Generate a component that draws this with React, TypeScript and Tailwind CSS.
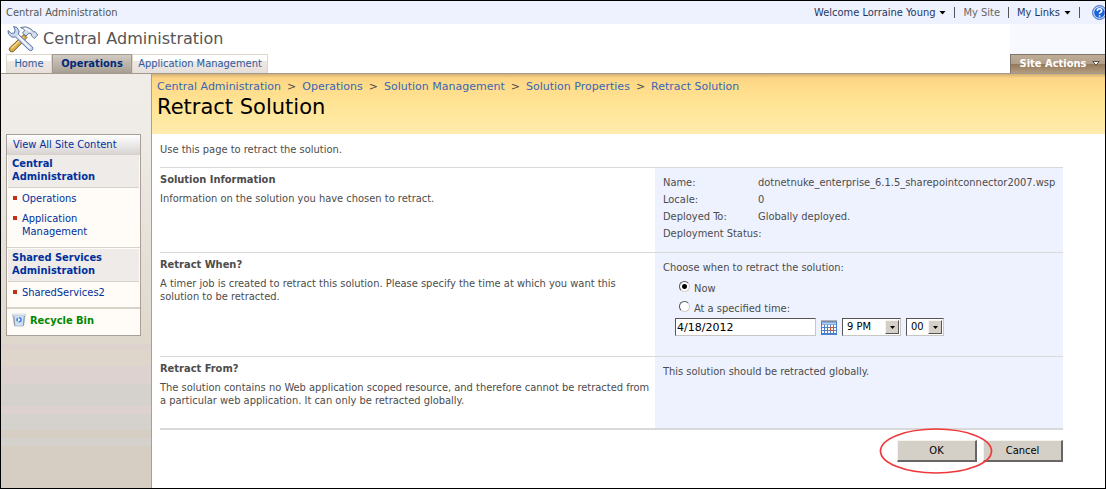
import { useState } from "react";
import type { ReactNode } from "react";

function Caret() {
  return (
    <svg width="7" height="4" viewBox="0 0 7 4" aria-hidden="true">
      <path d="M0.5 0h6L3.5 3.6z" fill="#000" />
    </svg>
  );
}

function ToolsIcon() {
  return (
    <svg width="32" height="28" viewBox="0 0 32 28" aria-hidden="true">
      <path d="M3 22.500 17 9.500l3 3L6.500 26.500Q4.500 27.500 3 26 1.500 24.500 3 22.500z" fill="#d9ac4c" stroke="#7d5f24" strokeWidth="1" />
      <path d="M4.500 23.500 16.500 12" stroke="#f7dc94" strokeWidth="1.300" />
      <path d="M13.500 2.500Q19 .5 24 4l2.500 3 1.500-.5 2.800 3.500-3.600 3.500-3-3 .3-1.500-2.500-1-3 3-3.500-3 2.500-3Q15.500 3.500 13.500 2.500z" fill="#d3dcea" stroke="#66799c" strokeWidth="1" />
      <path d="M17 3.500q3.500 0 6.500 3" stroke="#fff" strokeWidth="1.300" fill="none" />
      <path d="M6.500 1.500 10 2.500 12 6l-.5 3.500L25.500 22q1 1.500-.3 3-1.700 1.500-3.200 0L8.500 12 5 12.200 1.500 9 1 5.500l3.500 3 3-.7.600-3z" fill="#cbd8ee" stroke="#5673a9" strokeWidth="1" />
      <path d="m10.500 10.500 12.500 12.500" stroke="#fff" strokeWidth="1.400" />
    </svg>
  );
}

function HelpIcon() {
  return (
    <svg width="15" height="15" viewBox="0 0 15 15" aria-hidden="true">
      <circle cx="7.500" cy="7.500" r="6.900" fill="#cfdcf5" stroke="#2e63c2" />
      <circle cx="7.500" cy="7.500" r="5.300" fill="#1c62d8" />
      <path d="M5.300 6q0-2.200 2.200-2.200T9.700 5.700q0 1.100-1.100 1.600-1 .5-1 1.500M7.600 10.200v1.500" stroke="#fff" strokeWidth="1.600" fill="none" />
    </svg>
  );
}

function RecycleIcon() {
  return (
    <svg width="14" height="14" viewBox="0 0 14 14" aria-hidden="true">
      <path d="M.7 1.500h12.600L11.500 13h-9z" fill="#cfe0f3" stroke="#a9b6c4" strokeWidth=".8" />
      <path d="M.5 1h13v1.500H.5z" fill="#eef3f8" stroke="#b9c3ce" strokeWidth=".5" />
      <path d="M2.800 12.500 1.800 3M11.300 12.500l1-9.500" stroke="#8b98a7" strokeWidth="1" />
      <circle cx="7" cy="6.800" r="2" fill="#f1f7fe" stroke="#3d7fe0" strokeWidth="1.500" strokeDasharray="3.200 1" />
    </svg>
  );
}

function CalendarIcon() {
  return (
    <svg width="16" height="15" viewBox="0 0 16 15" aria-hidden="true">
      <path d="M0 1.500h16V15H0z" fill="#4a80cc" />
      <path d="M1 2.500h14v2H1z" fill="#b9cff0" />
      <path d="M.5 1h15" stroke="#444" strokeWidth="1.500" strokeDasharray="1 1" />
      <path d="M1 5h2v2H1zM4 5h2v2H4zM7 5h2v2H7zM10 5h2v2h-2zM13 5h2v2h-2zM1 8h2v2H1zM4 8h2v2H4zM7 8h2v2H7zM13 8h2v2h-2zM1 11h2v2H1zM4 11h2v2H4zM7 11h2v2H7zM10 11h2v2h-2zM13 11h2v2h-2z" fill="#fff" />
      <path d="M9.500 7.500h3v3h-3z" fill="#fff" stroke="#e8481c" />
    </svg>
  );
}

function SideHeading({ children }: { children: ReactNode }) {
  return (
    <h2 className="mx-px border-b border-[#d6d3c8] bg-[#eeebe8] px-1 pt-0.5 pb-1 font-bold">
      <a href="#" className="block">{children}</a>
    </h2>
  );
}

function SideItem({ children }: { children: ReactNode }) {
  return (
    <li className="flex gap-[5px]">
      <span className="mt-1 h-1 w-1 shrink-0 bg-[#c0301a]" />
      <a href="#">{children}</a>
    </li>
  );
}

function Section({ title, text, className, children }: { title: string; text: string; className: string; children: ReactNode }) {
  return (
    <section className={"grid grid-cols-[minmax(0,1fr)_408px] border-t border-[#d9d9d9] " + className}>
      <div className="pt-[5px]">
        <h2 className="mb-1.5 font-bold">{title}</h2>
        <p>{text}</p>
      </div>
      <div className="bg-[#eef2ff] pl-2">{children}</div>
    </section>
  );
}

function TimeSelect({ label, options, className }: { label: string; options: string[]; className: string }) {
  return (
    <span className="relative inline-flex">
      <select
        aria-label={label}
        className={"h-[18px] appearance-none rounded-none border border-t-[#555] border-l-[#555] border-r-[#c8c6c0] border-b-[#c8c6c0] bg-white pl-1 text-[11px] leading-4 text-black " + className}
      >
        {options.map((o) => (
          <option key={o}>{o}</option>
        ))}
      </select>
      <span className="pointer-events-none absolute top-0.5 right-0.5 flex h-3.5 w-3.5 items-center justify-center border border-t-[#f5f4f0] border-l-[#f5f4f0] border-r-[#555] border-b-[#555] bg-[#d4d0c8]">
        <svg width="5" height="3" viewBox="0 0 5 3" aria-hidden="true">
          <path d="M0 0h5L2.500 3z" />
        </svg>
      </span>
    </span>
  );
}

function Radio({ id, label, checked, onChange }: { id: string; label: string; checked: boolean; onChange: () => void }) {
  return (
    <div className="flex h-5 items-center gap-1">
      <input
        type="radio"
        id={id}
        name="when"
        checked={checked}
        onChange={onChange}
        className="mb-1 h-[11px] w-[11px] appearance-none rounded-full border border-t-[#555] border-l-[#555] border-r-[#d4d0c8] border-b-[#d4d0c8] bg-white checked:bg-[radial-gradient(circle,#000_2px,#fff_3px)]"
      />
      <label htmlFor={id}>{label}</label>
    </div>
  );
}

const crumbs = ["Central Administration", "Operations", "Solution Management", "Solution Properties"];

const details = [
  ["Name:", "dotnetnuke_enterprise_6.1.5_sharepointconnector2007.wsp"],
  ["Locale:", "0"],
  ["Deployed To:", "Globally deployed."],
  ["Deployment Status:", ""],
];

const buttonStyle =
  "h-[22px] w-20 border border-t-[#f4f3ef] border-l-[#f4f3ef] border-r-2 border-b-2 border-r-[#666] border-b-[#666] bg-[#d4d0c8] text-black";

export default function App() {
  const [when, setWhen] = useState("now");
  return (
    <div className="flex min-h-screen flex-col overflow-hidden border border-black bg-white font-['DejaVu_Sans_Condensed','DejaVu_Sans',sans-serif] text-[11px] leading-[13px] text-[#4c4c4c]">
      <div className="flex h-[23px] items-center justify-between bg-[#eef2ff] pl-[5px]">
        <a href="#" className="text-[#555]">Central Administration</a>
        <div className="flex items-center text-[#1f3760]">
          <button className="flex items-center gap-1">Welcome Lorraine Young <Caret /></button>
          <span className="mx-2 h-[11px] w-px bg-[#555]" />
          <a href="#" className="text-[#666]">My Site</a>
          <span className="mx-2 h-[11px] w-px bg-[#555]" />
          <button className="flex items-center gap-1">My Links <Caret /></button>
          <span className="mr-3 ml-2 h-[11px] w-px bg-[#555]" />
          <a href="#" aria-label="Help" className="-mr-0.5"><HelpIcon /></a>
        </div>
      </div>

      <header className="flex justify-between border-b border-[#a39a8e]">
        <div className="flex flex-col">
          <div className="flex h-[30px] items-center gap-1 pl-1.5">
            <ToolsIcon />
            <h1 className="font-['DejaVu_Sans',sans-serif] text-[16px] leading-5 text-[#555]">Central Administration</h1>
          </div>
          <nav className="flex h-[19px] pl-[5px] text-[#2c5a9e]">
            <a href="#" className="flex w-[46px] items-center justify-center border border-b-0 border-[#ddd6cb] bg-[linear-gradient(#fff_30%,#efe7e4_35%,#e6e0dc)] pb-0.5">Home</a>
            <a href="#" className="flex w-20 items-center justify-center border border-b-0 border-[#a39a8e] bg-[linear-gradient(#d2cbc4,#bdb5ac_50%,#a79e93)] pb-0.5 font-bold text-[#00297a]">Operations</a>
            <a href="#" className="flex w-[136px] items-center justify-center border border-b-0 border-[#ddd6cb] bg-[linear-gradient(#fff_30%,#efe7e4_35%,#e6e0dc)] pb-0.5">Application Management</a>
          </nav>
        </div>
        <div className="flex w-[95px] flex-col justify-end bg-[#f7f9ff]">
          <button className="flex h-[19px] items-center justify-center gap-1.5 border-t border-l border-[#7d756c] bg-[linear-gradient(#c0ad98,#b39f88_48%,#94795a_52%,#b39c80)] pb-0.5 pl-1 font-bold whitespace-nowrap text-white">
            Site Actions
            <svg width="8" height="5" viewBox="0 0 8 5" aria-hidden="true"><path d="M.8.500h6.400L4 4.200z" fill="#fff" stroke="#444" strokeWidth=".9" /></svg>
          </button>
        </div>
      </header>

      <div className="flex grow">
        <aside className="w-[151px] shrink-0 border-r border-[#a89f98] bg-[linear-gradient(#f0ece7_0,#efebe6_60px,#ded8cc_270px,#ded2cf_270px,#ded2cf_276px,#ded5cb_276px,#ded5cb_292px,#ddd2cf_292px,#ddd2cf_310px,#d5d2cd_310px,#d5d2cd_332px,#ddd2cf_332px,#ddd2cf_340px,#d5d2cd_340px,#d5d2cd_356px,#d6cdc3_356px,#d6cdc3_364px,#d5d2cd_364px,#d5d2cd_372px,#d6cdc3_372px)] pt-[60px] pl-[5px] text-[#00309c]">
          <nav className="w-[135px] border border-[#a89f98] bg-[#fffcf7]">
            <a href="#" className="block h-5 border-b border-[#d6d3c8] bg-[linear-gradient(#fff,#d9d4d3)] pt-[3px] pl-1.5">View All Site Content</a>
            <SideHeading>Central<br />Administration</SideHeading>
            <ul className="flex flex-col gap-[7px] px-1.5 pt-1 pb-[9px]">
              <SideItem>Operations</SideItem>
              <SideItem>Application<br />Management</SideItem>
            </ul>
            <div className="border-t border-[#d6d3c8] pt-px">
              <SideHeading>Shared Services Administration</SideHeading>
            </div>
            <ul className="px-1.5 pt-1 pb-2">
              <SideItem>SharedServices2</SideItem>
            </ul>
            <a href="#" className="flex h-7 items-center gap-1 border-t-2 border-[#d6d3c8] pb-1 pl-[5px] font-bold text-[#008800]">
              <RecycleIcon />Recycle Bin
            </a>
          </nav>
        </aside>

        <main className="min-w-0 grow">
          <div className="h-[60px] bg-[linear-gradient(#d4af74_0,#fcd586_4px,#ffdc8a_14px,#ffe394_28px,#ffe79b_40px,#ffebae_60px)] pt-1.5 pl-[5px] font-['DejaVu_Sans',sans-serif]">
            <nav aria-label="Breadcrumb" className="flex gap-1.5">
              {crumbs.map((c) => (
                <span key={c} className="flex gap-1.5"><a href="#" className="text-[#3966b5]">{c}</a>&gt;</span>
              ))}
              <span className="text-[#3966b5]">Retract Solution</span>
            </nav>
            <h1 className="text-[21px] leading-7 text-black">Retract Solution</h1>
          </div>

          <form className="pr-[42px] pb-6 pl-2" onSubmit={(e) => e.preventDefault()}>
            <p className="pt-[9px] pb-[11px]">Use this page to retract the solution.</p>
            <Section title="Solution Information" text="Information on the solution you have chosen to retract." className="min-h-[85px]">
              <dl className="grid grid-cols-[95px_minmax(0,1fr)] pt-1.5 leading-[17px]">
                {details.map(([k, v]) => (
                  <div key={k} className="contents">
                    <dt className="whitespace-nowrap">{k}</dt>
                    <dd className="whitespace-nowrap">{v}</dd>
                  </div>
                ))}
              </dl>
            </Section>
            <Section title="Retract When?" text="A timer job is created to retract this solution. Please specify the time at which you want this solution to be retracted." className="min-h-[104px]">
              <p className="pt-2 pb-1">Choose when to retract the solution:</p>
              <div className="pl-4">
                <Radio id="now" label="Now" checked={when === "now"} onChange={() => setWhen("now")} />
                <Radio id="later" label="At a specified time:" checked={when === "later"} onChange={() => setWhen("later")} />
              </div>
              <div className="flex items-center pl-3">
                <input
                  type="text"
                  aria-label="Date"
                  defaultValue="4/18/2012"
                  className="h-[18px] w-[141px] border border-t-[#555] border-l-[#555] border-r-[#c8c6c0] border-b-[#c8c6c0] bg-white px-px font-['DejaVu_Sans',sans-serif] text-[11px] text-black"
                />
                <button type="button" aria-label="Pick a date" className="mx-[5px]"><CalendarIcon /></button>
                <span className="flex gap-[5px]">
                  <TimeSelect label="Hour" options={["9 PM", "10 PM", "11 PM"]} className="w-[59px]" />
                  <TimeSelect label="Minutes" options={["00", "15", "30", "45"]} className="w-[38px]" />
                </span>
              </div>
            </Section>
            <Section title="Retract From?" text="The solution contains no Web application scoped resource, and therefore cannot be retracted from a particular web application. It can only be retracted globally." className="min-h-[74px] border-b-2">
              <p className="pt-2">This solution should be retracted globally.</p>
            </Section>
            <div className="flex justify-end gap-1.5 pt-2.5">
              <span className="relative">
                <button type="submit" className={buttonStyle}>OK</button>
                <svg className="pointer-events-none absolute -top-3 -left-[18px] z-10" width="114" height="48" viewBox="0 0 114 48" aria-hidden="true">
                  <ellipse cx="57" cy="23" rx="55.500" ry="22" fill="none" stroke="#f0383c" strokeWidth="1.700" />
                </svg>
              </span>
              <button type="button" className={buttonStyle}>Cancel</button>
            </div>
          </form>
        </main>
      </div>
    </div>
  );
}
